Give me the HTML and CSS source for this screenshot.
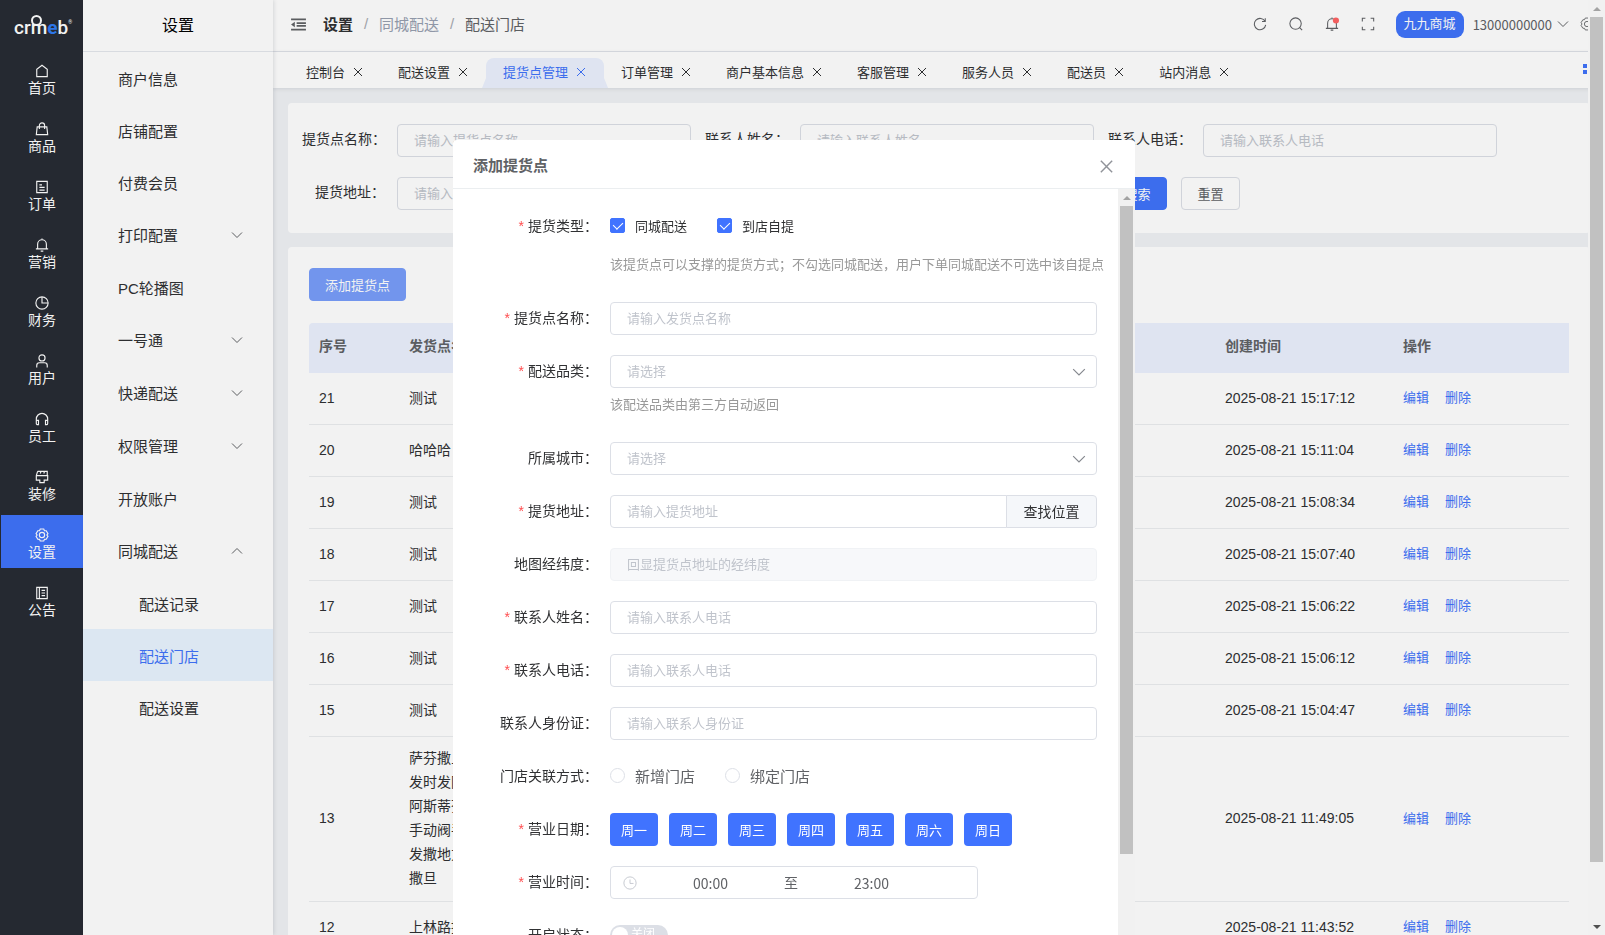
FILE: index.html
```html
<!DOCTYPE html>
<html lang="zh-CN">
<head>
  <meta charset="UTF-8" />
  <meta name="viewport" content="width=device-width, initial-scale=1.0"/>
  <title>配送门店</title>
  <link rel="stylesheet" href="styles.css">
</head>
<body>
  <!-- shared icons -->
  <svg class="sprite" aria-hidden="true">
    <symbol id="i-down" viewBox="0 0 12 12"><path d="M1 3.500l5 5 5-5"/></symbol>
    <symbol id="i-up" viewBox="0 0 12 12"><path d="M1 8.500l5-5 5 5"/></symbol>
    <symbol id="i-close" viewBox="0 0 12 12"><path d="M2 2l8 8M10 2l-8 8"/></symbol>
    <symbol id="i-gear" viewBox="0 0 16 16"><path d="M6 1.200h4l.8 1.800 2 .2 2 3.300L13.600 8l1.200 1.500-2 3.300-2 .2-.8 1.800H6L5.200 13l-2-.2-2-3.300L2.400 8 1.200 6.500l2-3.300 2-.2z"/><circle cx="8" cy="8" r="3"/></symbol>
  </svg>

  <div class="app">
    <nav class="rail">
      <div class="logo"><span class="logo-m">crm</span><b>e</b>b<sup>®</sup></div>
      <a class="rail-item" href="#"><svg viewBox="0 0 16 16"><path d="M2 14.500V6l6-4.500L14 6v8.500z"/></svg>首页</a>
      <a class="rail-item" href="#"><svg viewBox="0 0 16 16"><path d="M2.500 5.500h11l1 9h-13zM5 8V4a3 3 0 0 1 6 0v4"/></svg>商品</a>
      <a class="rail-item" href="#"><svg viewBox="0 0 16 16"><path d="M2 1.500h12v13H2zM5 5.500h3M5 8.500h6M5 11.500h6"/></svg>订单</a>
      <a class="rail-item" href="#"><svg viewBox="0 0 16 16"><path d="M1 12.500h14M3 12.500V7a5 5 0 0 1 10 0v5.500M8 .5V2M6.500 15h3"/></svg>营销</a>
      <a class="rail-item" href="#"><svg viewBox="0 0 16 16"><circle cx="8" cy="8" r="7"/><path d="M8 1v7h7"/></svg>财务</a>
      <a class="rail-item" href="#"><svg viewBox="0 0 16 16"><circle cx="8" cy="4.500" r="3.500"/><path d="M2 15.500V13a3 3 0 0 1 3-3h6a3 3 0 0 1 3 3v2.500"/></svg>用户</a>
      <a class="rail-item" href="#"><svg viewBox="0 0 16 16"><path d="M1.500 12V8a6.500 6.500 0 0 1 13 0v4M1.500 9.500h2.500v5H3a1.500 1.500 0 0 1-1.500-1.500zM14.500 9.500H12v5h1a1.500 1.500 0 0 0 1.500-1.500z"/></svg>员工</a>
      <a class="rail-item" href="#"><svg viewBox="0 0 16 16"><path d="M3 1.500h11v5M3 1.500L1.500 6.500v5H5.500v3h5v-3h4v-5h-13M7 1.500L6 4M11 1.500L10 4"/></svg>装修</a>
      <a class="rail-item active" href="#"><svg><use href="#i-gear"/></svg>设置</a>
      <a class="rail-item" href="#"><svg viewBox="0 0 16 16"><path d="M2 1.500h12v13H2zM5 1.500v13M7.500 5h4M7.500 8h4M7.500 11h4"/></svg>公告</a>
    </nav>

    <aside class="menu">
      <h2 class="menu-title">设置</h2>
      <a href="#">商户信息</a>
      <a href="#">店铺配置</a>
      <a href="#">付费会员</a>
      <a class="has-sub" href="#">打印配置<svg><use href="#i-down"/></svg></a>
      <a href="#">PC轮播图</a>
      <a class="has-sub" href="#">一号通<svg><use href="#i-down"/></svg></a>
      <a class="has-sub" href="#">快递配送<svg><use href="#i-down"/></svg></a>
      <a class="has-sub" href="#">权限管理<svg><use href="#i-down"/></svg></a>
      <a href="#">开放账户</a>
      <a class="has-sub" href="#">同城配送<svg><use href="#i-up"/></svg></a>
      <a class="sub" href="#">配送记录</a>
      <a class="sub active" href="#">配送门店</a>
      <a class="sub" href="#">配送设置</a>
    </aside>

    <main class="main">
      <header class="topbar">
        <svg class="fold" viewBox="0 0 16 14"><path d="M0 1.500h16M6 5.500h10M6 8.500h10M0 12.500h16"/><path class="solid" d="M0 7l4-3v6z"/></svg>
        <div class="crumbs"><b>设置</b><i>/</i><span>同城配送</span><i>/</i><em>配送门店</em></div>
        <div class="tools">
          <svg viewBox="0 0 16 16"><path d="M13.800 5A6.500 6.500 0 1 0 14.500 9M14 1.500V5.200h-3.700"/></svg>
          <svg viewBox="0 0 16 16"><circle cx="7.500" cy="7.500" r="6.500"/><path d="M12.200 12.200l2.800 2.800"/></svg>
          <svg viewBox="0 0 16 16"><path d="M1 13h14M3 13V7a5 5 0 0 1 10 0v6M6.500 15h3M8 .5V2"/><circle class="dot" cx="12.500" cy="4" r="3.500"/></svg>
          <svg viewBox="0 0 16 16"><path d="M1.500 5V1.500H5M11 1.500h3.500V5M14.500 11v3.500H11M5 14.500H1.500V11"/></svg>
        </div>
        <span class="shop">九九商城</span>
        <span class="account">13000000000<svg><use href="#i-down"/></svg></span>
        <svg class="gear"><use href="#i-gear"/></svg>
      </header>

      <div class="tabs">
        <a class="tab" href="#">控制台<svg><use href="#i-close"/></svg></a>
        <a class="tab" href="#">配送设置<svg><use href="#i-close"/></svg></a>
        <a class="tab active" href="#">提货点管理<svg><use href="#i-close"/></svg></a>
        <a class="tab" href="#">订单管理<svg><use href="#i-close"/></svg></a>
        <a class="tab" href="#">商户基本信息<svg><use href="#i-close"/></svg></a>
        <a class="tab" href="#">客服管理<svg><use href="#i-close"/></svg></a>
        <a class="tab" href="#">服务人员<svg><use href="#i-close"/></svg></a>
        <a class="tab" href="#">配送员<svg><use href="#i-close"/></svg></a>
        <a class="tab" href="#">站内消息<svg><use href="#i-close"/></svg></a>
        <svg class="tabs-more" viewBox="0 0 10 10"><path d="M0 0h4v4H0zM6 0h4v4H6zM0 6h4v4H0zM6 6h4v4H6z"/></svg>
      </div>

      <section class="card">
        <form class="search">
          <div class="field"><label for="s-name">提货点名称：</label><input class="input" id="s-name" placeholder="请输入提货点名称"></div>
          <div class="field"><label for="s-contact">联系人姓名：</label><input class="input" id="s-contact" placeholder="请输入联系人姓名"></div>
          <div class="field"><label for="s-phone">联系人电话：</label><input class="input" id="s-phone" placeholder="请输入联系人电话"></div>
          <div class="field"><label for="s-addr">提货地址：</label><input class="input" id="s-addr" placeholder="请输入提货地址"></div>
          <div class="actions">
            <button class="btn primary" type="button">搜索</button>
            <button class="btn" type="button">重置</button>
          </div>
        </form>
      </section>

      <section class="card list">
        <button class="btn primary light" type="button">添加提货点</button>
        <table>
          <colgroup><col class="c-id"><col class="c-name"><col><col class="c-time"><col class="c-op"></colgroup>
          <thead>
            <tr><th>序号</th><th>发货点名称</th><th></th><th>创建时间</th><th>操作</th></tr>
          </thead>
          <tbody>
            <tr><td>21</td><td>测试</td><td></td><td>2025-08-21 15:17:12</td><td><a href="#">编辑</a><a href="#">删除</a></td></tr>
            <tr><td>20</td><td>哈哈哈</td><td></td><td>2025-08-21 15:11:04</td><td><a href="#">编辑</a><a href="#">删除</a></td></tr>
            <tr><td>19</td><td>测试</td><td></td><td>2025-08-21 15:08:34</td><td><a href="#">编辑</a><a href="#">删除</a></td></tr>
            <tr><td>18</td><td>测试</td><td></td><td>2025-08-21 15:07:40</td><td><a href="#">编辑</a><a href="#">删除</a></td></tr>
            <tr><td>17</td><td>测试</td><td></td><td>2025-08-21 15:06:22</td><td><a href="#">编辑</a><a href="#">删除</a></td></tr>
            <tr><td>16</td><td>测试</td><td></td><td>2025-08-21 15:06:12</td><td><a href="#">编辑</a><a href="#">删除</a></td></tr>
            <tr><td>15</td><td>测试</td><td></td><td>2025-08-21 15:04:47</td><td><a href="#">编辑</a><a href="#">删除</a></td></tr>
            <tr><td>13</td><td>萨芬撒旦<br>发时发阿<br>阿斯蒂芬<br>手动阀手<br>发撒地方<br>撒旦</td><td></td><td>2025-08-21 11:49:05</td><td><a href="#">编辑</a><a href="#">删除</a></td></tr>
            <tr><td>12</td><td>上林路提</td><td></td><td>2025-08-21 11:43:52</td><td><a href="#">编辑</a><a href="#">删除</a></td></tr>
          </tbody>
        </table>
      </section>
    </main>
  </div>

  <div class="mask">
    <div class="dialog" role="dialog" aria-labelledby="dialog-title">
      <div class="dialog-head">
        <h3 id="dialog-title">添加提货点</h3>
        <button class="dialog-close" type="button" aria-label="关闭"><svg><use href="#i-close"/></svg></button>
      </div>
      <div class="dialog-body">
        <form class="form">
          <div class="row">
            <span class="label required">提货类型：</span>
            <div class="control">
              <div class="choices">
                <label class="check"><input type="checkbox" checked>同城配送</label>
                <label class="check"><input type="checkbox" checked>到店自提</label>
              </div>
              <p class="hint spaced">该提货点可以支撑的提货方式；不勾选同城配送，用户下单同城配送不可选中该自提点</p>
            </div>
          </div>
          <div class="row">
            <label class="label required" for="f-name">提货点名称：</label>
            <div class="control"><input class="input" id="f-name" placeholder="请输入发货点名称"></div>
          </div>
          <div class="row">
            <label class="label required" for="f-kind">配送品类：</label>
            <div class="control">
              <div class="select"><select class="input" id="f-kind"><option>请选择</option></select><svg><use href="#i-down"/></svg></div>
              <p class="hint">该配送品类由第三方自动返回</p>
            </div>
          </div>
          <div class="row">
            <label class="label" for="f-city">所属城市：</label>
            <div class="control">
              <div class="select"><select class="input" id="f-city"><option>请选择</option></select><svg><use href="#i-down"/></svg></div>
            </div>
          </div>
          <div class="row">
            <label class="label required" for="f-addr">提货地址：</label>
            <div class="control append"><input class="input" id="f-addr" placeholder="请输入提货地址"><button type="button">查找位置</button></div>
          </div>
          <div class="row">
            <label class="label" for="f-geo">地图经纬度：</label>
            <div class="control"><input class="input" id="f-geo" placeholder="回显提货点地址的经纬度" disabled></div>
          </div>
          <div class="row">
            <label class="label required" for="f-contact">联系人姓名：</label>
            <div class="control"><input class="input" id="f-contact" placeholder="请输入联系人电话"></div>
          </div>
          <div class="row">
            <label class="label required" for="f-phone">联系人电话：</label>
            <div class="control"><input class="input" id="f-phone" placeholder="请输入联系人电话"></div>
          </div>
          <div class="row">
            <label class="label" for="f-card">联系人身份证：</label>
            <div class="control"><input class="input" id="f-card" placeholder="请输入联系人身份证"></div>
          </div>
          <div class="row">
            <span class="label">门店关联方式：</span>
            <div class="control choices">
              <label class="radio"><input type="radio" name="bind">新增门店</label>
              <label class="radio"><input type="radio" name="bind">绑定门店</label>
            </div>
          </div>
          <div class="row">
            <span class="label required">营业日期：</span>
            <div class="control days">
              <button type="button">周一</button>
              <button type="button">周二</button>
              <button type="button">周三</button>
              <button type="button">周四</button>
              <button type="button">周五</button>
              <button type="button">周六</button>
              <button type="button">周日</button>
            </div>
          </div>
          <div class="row">
            <label class="label required" for="f-open">营业时间：</label>
            <div class="control">
              <div class="timerange">
                <svg viewBox="0 0 16 16"><circle cx="8" cy="8" r="7"/><path d="M8 4v4.500h4"/></svg>
                <input id="f-open" value="00:00"><span>至</span><input aria-label="结束时间" value="23:00">
              </div>
            </div>
          </div>
          <div class="row">
            <label class="label" for="f-state">开启状态：</label>
            <div class="control choices">
              <span class="switch"><input type="checkbox" id="f-state"><span>关闭</span></span>
            </div>
          </div>
        </form>
        <div class="scrollbar" aria-hidden="true"><i class="arrow-up"></i><i class="thumb"></i><i class="arrow-down"></i></div>
      </div>
    </div>
  </div>

  <div class="scrollbar page-scroll" aria-hidden="true"><i class="arrow-up"></i><i class="thumb"></i><i class="arrow-down"></i></div>
</body>
</html>
```
FILE: styles.css
```css
* {
  box-sizing: border-box;
}

body {
  margin: 0;
  overflow: hidden;
  background-color: #f0f2f5;
  color: #303133;
  font-family: "Liberation Sans", "Noto Sans CJK SC", sans-serif;
  font-size: 14px;
}

a {
  color: inherit;
  text-decoration: none;
}

button, input, select {
  font-family: inherit;
  margin: 0;
}

svg {
  width: 12px;
  height: 12px;
  fill: none;
  stroke: currentColor;
  stroke-width: 1;
  flex: none;
}

.sprite {
  position: absolute;
  width: 0;
  height: 0;
}

.app {
  display: flex;
  height: 100vh;
}

/* left rail */
.rail {
  width: 83px;
  flex: none;
  background-color: #282c34;
  color: #fff;
}

.logo {
  height: 51px;
  padding: 16px 0 0 14px;
  font-family: Roboto, sans-serif;
  font-size: 19px;
  font-weight: 500;
  line-height: 24px;
  white-space: nowrap;
}

.logo b {
  color: #2f7df6;
}

.logo sup {
  font-size: 5px;
  line-height: 5px;
  vertical-align: 10px;
}

.logo-m {
  position: relative;
}

/* head of the little figure over the m */
.logo-m::after {
  content: "";
  position: absolute;
  top: -1px;
  right: 5px;
  width: 7px;
  height: 7px;
  border: 2px solid #fff;
  border-radius: 50%;
}

.rail-item {
  display: flex;
  flex-direction: column;
  align-items: center;
  height: 53px;
  margin: 0 0 5px 1px;
  padding-top: 13px;
  line-height: 20px;
}

.rail-item svg {
  width: 14px;
  height: 14px;
  stroke-width: 1.3;
}

.rail-item.active {
  background-color: #4073fa;
}

/* second level menu */
.menu {
  width: 190px;
  flex: none;
  background-color: #fff;
  box-shadow: 1px 0 4px rgba(0, 21, 41, 0.12);
  z-index: 1;
  font-size: 15px;
}

.menu-title {
  margin: 0;
  height: 52px;
  border-bottom: 1px solid #e4e7ed;
  color: #000;
  font-size: 16px;
  font-weight: 400;
  line-height: 51px;
  text-align: center;
}

.menu a {
  display: flex;
  align-items: center;
  justify-content: space-between;
  height: 52px;
  padding: 0 30px 0 35px;
}

.menu a.has-sub {
  height: 53px;
}

.menu a.sub {
  padding-left: 56px;
}

.menu a.active {
  background-color: #e8f4ff;
  color: #4073fa;
}

.menu svg {
  color: #606266;
}

/* top bar */
.main {
  flex: 1;
  min-width: 0;
}

.topbar {
  display: flex;
  align-items: center;
  height: 52px;
  padding: 0 11px 3px 18px;
  background-color: #fff;
  border-bottom: 1px solid #e4e7ed;
  color: #606266;
}

.fold {
  width: 15px;
  height: 13px;
  stroke-width: 2;
}

.fold .solid {
  fill: currentColor;
  stroke: none;
}

.crumbs {
  display: flex;
  align-items: center;
  margin: 0 0 2px 17px;
  font-size: 15px;
}

.crumbs b {
  color: #303133;
}

.crumbs i {
  width: 26px;
  color: #a8abb2;
  font-style: normal;
  text-align: center;
}

.crumbs span {
  color: #97a0b0;
}

.crumbs em {
  font-style: normal;
}

.tools {
  display: flex;
  gap: 22px;
  margin-left: auto;
}

.tools svg {
  width: 14px;
  height: 14px;
  stroke-width: 1.2;
}

.tools .dot {
  fill: #ff6464;
  stroke: none;
}

.shop {
  height: 27px;
  margin-left: 21px;
  padding: 0 8px;
  border-radius: 9px;
  background-color: #4073fa;
  color: #fff;
  font-size: 13px;
  line-height: 26px;
}

.account {
  display: flex;
  align-items: center;
  gap: 5px;
  margin-left: 9px;
  font-family: "Noto Sans CJK SC", sans-serif;
  font-size: 13px;
}

.gear {
  width: 14px;
  height: 14px;
  margin-left: 11px;
}

/* page tabs */
.tabs {
  display: flex;
  align-items: flex-end;
  height: 36px;
  padding-left: 16px;
  background-color: #fff;
  box-shadow: 0 1px 4px rgba(0, 21, 41, 0.1);
  font-size: 13px;
}

.tab {
  position: relative;
  display: flex;
  align-items: center;
  gap: 7px;
  height: 30px;
  padding: 0 17px 4px;
}

.tab svg {
  margin-top: 2px;
}

.tab.active {
  border-radius: 8px 8px 0 0;
  background-color: #ebf1fe;
  color: #4073fa;
}

/* flared feet of the current tab */
.tab.active::before,
.tab.active::after {
  content: "";
  position: absolute;
  bottom: 0;
  width: 4px;
  height: 10px;
  background-color: #ebf1fe;
}

.tab.active::before {
  left: -4px;
  clip-path: polygon(100% 0, 100% 100%, 0 100%);
}

.tab.active::after {
  right: -4px;
  clip-path: polygon(0 0, 100% 100%, 0 100%);
}

.tabs-more {
  width: 10px;
  height: 10px;
  margin: 0 12px 14px auto;
  fill: #4073fa;
  stroke: none;
}

/* cards */
.card {
  margin: 15px 15px 0;
  padding: 21px 14px 23px;
  border-radius: 4px;
  background-color: #fff;
}

.input {
  display: block;
  width: 100%;
  height: 33px;
  padding: 0 16px;
  border: 1px solid #dcdfe6;
  border-radius: 4px;
  background-color: #fff;
  color: #606266;
  font-size: 13px;
}

.input::placeholder {
  color: #c0c4cc;
}

.input:disabled {
  border-color: #f0f2f5;
  background-color: #f7f8fa;
}

.search {
  display: grid;
  grid-template-columns: repeat(3, 389px);
  gap: 20px 14px;
}

.search .field {
  display: flex;
}

.search label {
  width: 95px;
  flex: none;
  padding-right: 12px;
  line-height: 31px;
  text-align: right;
  white-space: nowrap;
}

.actions {
  grid-column: 3;
  display: flex;
  gap: 14px;
}

.btn {
  height: 33px;
  padding: 0 15px;
  border: 1px solid #dcdfe6;
  border-radius: 4px;
  background-color: #fff;
  color: #606266;
  font-size: 13px;
}

.actions .btn {
  width: 59px;
}

.btn.primary {
  border-color: #4073fa;
  background-color: #4073fa;
  color: #fff;
}

.btn.light {
  border-color: #799efa;
  background-color: #799efa;
}

.card.list {
  margin-top: 14px;
  padding: 21px;
}

table {
  width: 100%;
  margin-top: 22px;
  border-collapse: separate;
  border-spacing: 0;
  table-layout: fixed;
  line-height: 24px;
}

.c-id { width: 90px; }
.c-name { width: 120px; }
.c-time { width: 178px; }
.c-op { width: 176px; }

th {
  height: 50px;
  padding: 0 10px 4px;
  background-color: #ebf1fe;
  color: #606266;
  text-align: left;
}

th:first-child {
  border-radius: 4px 0 0 0;
}

td {
  height: 52px;
  padding: 9px 10px 11px;
  border-bottom: 1px solid #ebeef0;
}

td a {
  margin-right: 16px;
  color: #4073fa;
  font-size: 13px;
}

/* dialog, centred beside the page scroll bar */
.mask {
  position: fixed;
  inset: 0;
  padding: 15vh 17px 0 0;
  overflow: hidden;
  background-color: rgba(0, 0, 0, 0.05);
  z-index: 10;
}

.dialog {
  width: 682px;
  margin: 0 auto;
  border-radius: 4px;
  background-color: #fff;
}

.dialog-head {
  display: flex;
  align-items: center;
  justify-content: space-between;
  height: 49px;
  padding: 0 20px;
  border-bottom: 1px solid #ebeef0;
}

.dialog-head h3 {
  margin: 0;
  color: #606266;
  font-size: 15px;
}

.dialog-close {
  display: flex;
  margin-top: 4px;
  padding: 0;
  border: 0;
  background: none;
  color: #909399;
}

.dialog-close svg {
  width: 17px;
  height: 17px;
}

.dialog-body {
  display: flex;
  height: 81vh;
  overflow: hidden;
}

.form {
  flex: 1;
  min-width: 0;
  padding: 21px 21px 0 20px;
}

.row {
  display: flex;
  margin-bottom: 20px;
}

.label {
  width: 137px;
  flex: none;
  padding-right: 12px;
  line-height: 32px;
  text-align: right;
}

.required::before {
  content: "*";
  margin-right: 4px;
  color: #ff4d4f;
}

.control {
  flex: 1;
  min-width: 0;
}

.choices {
  display: flex;
  align-items: center;
  gap: 30px;
  height: 33px;
  padding-bottom: 2px;
}

.check, .radio {
  display: flex;
  align-items: center;
  gap: 10px;
  font-size: 13px;
}

.radio {
  color: #606266;
  font-size: 15px;
}

.check input, .radio input {
  appearance: none;
  position: relative;
  width: 15px;
  height: 15px;
  border: 1px solid #dcdfe6;
  border-radius: 2px;
}

.radio input {
  border-radius: 50%;
}

.check input:checked {
  border-color: #4073ff;
  background-color: #4073ff;
}

.check input:checked::after {
  content: "";
  position: absolute;
  top: 1px;
  left: 4px;
  width: 5px;
  height: 8px;
  border: solid #fff;
  border-width: 0 1px 1px 0;
  transform: rotate(45deg);
}

.hint {
  margin: 0;
  color: #999;
  font-size: 13px;
  line-height: 34px;
  white-space: nowrap;
}

.hint.spaced {
  margin-top: 5px;
}

.select {
  position: relative;
}

.select select {
  appearance: none;
  color: #c0c4cc;
}

.select svg {
  position: absolute;
  top: 10px;
  right: 11px;
  width: 14px;
  height: 14px;
  color: #85888e;
}

.append {
  display: flex;
}

.append .input {
  border-radius: 4px 0 0 4px;
}

.append button {
  width: 91px;
  flex: none;
  margin-left: -1px;
  padding: 0 0 2px;
  border: 1px solid #dcdfe6;
  border-radius: 0 4px 4px 0;
  background-color: #f5f7fa;
  color: #303133;
  font-size: 14px;
}

.days {
  display: flex;
  gap: 11px;
}

.days button {
  width: 48px;
  height: 33px;
  padding: 0;
  border: 0;
  border-radius: 4px;
  background-color: #4073ff;
  color: #fff;
  font-size: 13px;
}

.timerange {
  display: flex;
  align-items: center;
  width: 368px;
  height: 33px;
  padding: 0 32px 0 12px;
  border: 1px solid #dcdfe6;
  border-radius: 4px;
  color: #606266;
  line-height: 28px;
}

.timerange svg {
  width: 14px;
  height: 14px;
  color: #c0c4cc;
}

.timerange input {
  flex: 1;
  min-width: 0;
  padding: 0;
  border: 0;
  color: inherit;
  font-family: "Noto Sans CJK SC", sans-serif;
  font-size: 14px;
  text-align: center;
}

.switch {
  position: relative;
}

.switch input {
  appearance: none;
  display: block;
  width: 58px;
  height: 20px;
  border-radius: 10px;
  background-color: #dcdfe6;
}

.switch input::before {
  content: "";
  position: absolute;
  top: 2px;
  left: 2px;
  width: 16px;
  height: 16px;
  border-radius: 50%;
  background-color: #fff;
}

.switch span {
  position: absolute;
  top: 0;
  left: 21px;
  color: #fff;
  font-size: 12px;
  line-height: 19px;
  white-space: nowrap;
}

/* scroll bars */
.scrollbar {
  display: flex;
  flex-direction: column;
  align-items: center;
  width: 17px;
  flex: none;
  background-color: #f1f1f1;
}

.thumb {
  width: 13px;
  height: 648px;
  background-color: #c1c1c1;
}

.arrow-up, .arrow-down {
  display: flex;
  align-items: center;
  justify-content: center;
  height: 17px;
}

.arrow-up::before, .arrow-down::before {
  content: "";
  border: 4px solid transparent;
}

.arrow-up::before {
  border-top-width: 0;
  border-bottom-color: #a3a3a3;
}

.arrow-down {
  margin-top: auto;
}

.arrow-down::before {
  border-bottom-width: 0;
  border-top-color: #505050;
}

.page-scroll {
  position: fixed;
  top: 0;
  right: 0;
  bottom: 0;
  z-index: 20;
}

.page-scroll .thumb {
  height: 845px;
}
```
